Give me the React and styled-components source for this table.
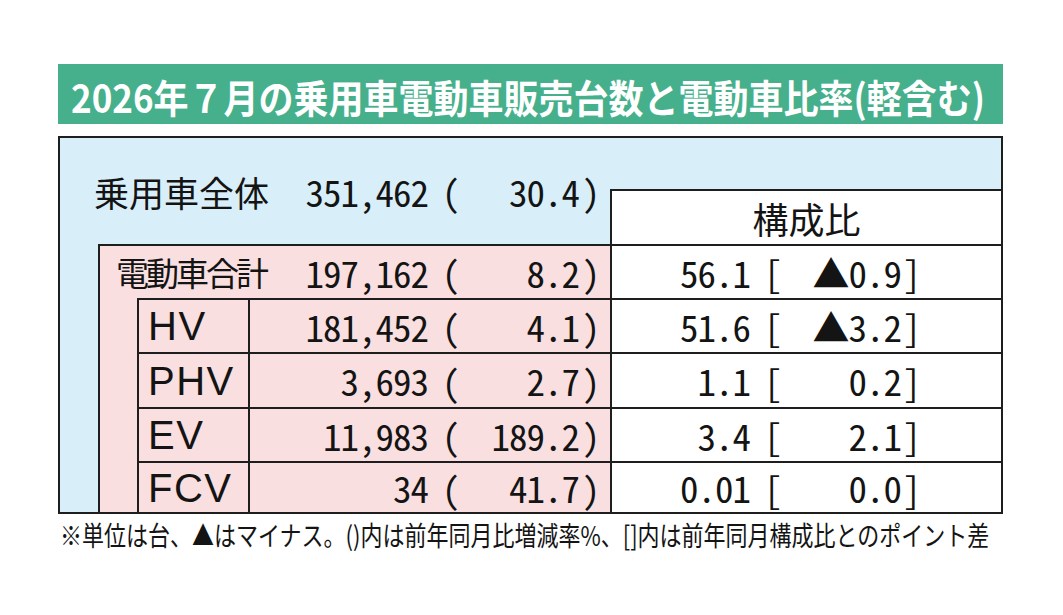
import React from 'react';
import styled, { createGlobalStyle } from 'styled-components';

const LINE = '#1e1e1e';
const BLUE = '#d8eff9';
const PINK = '#f9dfe0';
const GREEN = '#45b08b';
const JP = '"Noto Sans CJK JP", "Noto Sans", sans-serif';

const GlobalStyle = createGlobalStyle`
  html, body { margin: 0; padding: 0; background: #ffffff; }
  body { font-family: ${JP}; color: #141414; }
  * { box-sizing: border-box; }
`;

const Page = styled.div`
  width: 1063px;
  height: 615px;
  padding: 64px 60px 0 58px;
  display: flex;
  flex-direction: column;
`;

const TitleBar = styled.div`
  height: 60px;
  background: ${GREEN};
  display: flex;
  align-items: center;
  padding-left: 13px;
`;

const TitleText = styled.span`
  display: inline-block;
  white-space: nowrap;
  color: #ffffff;
  font-family: ${JP};
  font-weight: 700;
  font-size: 35px;
  line-height: 1;
  transform: scaleY(1.12);
  margin-top: 3px;
`;

const Frame = styled.div`
  margin-top: 12px;
  border: 2px solid ${LINE};
  background: ${BLUE};
  display: grid;
  grid-template-columns: 38px 39px 113px 360px 1fr;
  grid-template-rows: 51px 55px 54px 54px 55px 54px 51px;
  font-size: 35px;
  line-height: 1;
`;

const TotalRow = styled.div`
  grid-column: 1 / 5;
  grid-row: 1 / 3;
  display: flex;
  align-items: center;
  padding-left: 34px;
`;

const HeaderCell = styled.div`
  grid-column: 5;
  grid-row: 2;
  background: #ffffff;
  border-top: 2px solid ${LINE};
  border-left: 2px solid ${LINE};
  display: flex;
  align-items: center;
  justify-content: center;
  font-size: 36px;
`;

const GroupRow = styled.div`
  grid-column: 2 / 5;
  grid-row: 3;
  background: ${PINK};
  border-top: 2px solid ${LINE};
  border-left: 2px solid ${LINE};
  display: flex;
  align-items: center;
  padding-left: 16px;
`;

const Indent = styled.div`
  grid-column: 2;
  grid-row: 4 / 8;
  background: ${PINK};
  border-left: 2px solid ${LINE};
`;

const NameCell = styled.div`
  grid-column: 3;
  grid-row: ${(p) => p.$row};
  background: ${PINK};
  border-top: 2px solid ${LINE};
  border-left: 2px solid ${LINE};
  border-right: 2px solid ${LINE};
  display: flex;
  align-items: center;
  padding-left: 9px;
  font-family: "Liberation Sans", Arial, sans-serif;
  font-size: 40px;
  letter-spacing: 1.5px;
`;

const ValueCell = styled.div`
  grid-column: 4;
  grid-row: ${(p) => p.$row};
  background: ${PINK};
  border-top: 2px solid ${LINE};
  display: flex;
  align-items: center;
`;

const ShareCell = styled.div`
  grid-column: 5;
  grid-row: ${(p) => p.$row};
  background: #ffffff;
  border-top: 2px solid ${LINE};
  border-left: 2px solid ${LINE};
  display: flex;
  align-items: center;
`;

const RowLabel = styled.span`
  white-space: nowrap;
  font-size: ${(p) => (p.$tight ? '33px' : '35px')};
  letter-spacing: ${(p) => (p.$tight ? '-3px' : '0')};
`;

const Num = styled.span`
  white-space: nowrap;
  font-size: 37px;
  letter-spacing: -1px;
  font-feature-settings: "hwid" 1;
`;

const Count = styled.span`
  margin-left: auto;
  display: flex;
  align-items: center;
  white-space: nowrap;
`;

const Pct = styled.span`
  width: 150px;
  display: flex;
  align-items: center;
  justify-content: flex-end;
  padding-right: 10px;
  white-space: nowrap;
`;

const Mark = styled.span`
  font-size: 36px;
  font-feature-settings: "hwid" 1;
  margin-left: ${(p) => p.$gap || 0}px;
`;

const ShareMain = styled.span`
  width: 170px;
  display: flex;
  justify-content: flex-end;
  align-items: center;
  white-space: nowrap;
`;

const ShareDiff = styled.span`
  width: 139px;
  display: flex;
  justify-content: flex-end;
  align-items: center;
  white-space: nowrap;
`;

const Footnote = styled.div`
  margin-top: 9px;
  padding-left: 2px;
`;

const FootText = styled.span`
  display: inline-block;
  white-space: nowrap;
  font-size: 22px;
  line-height: 1;
  color: #141414;
  transform: scaleY(1.22);
`;

const subRows = [
  { name: 'HV', count: '181,452', pct: '4.1', share: '51.6', diff: '▲3.2' },
  { name: 'PHV', count: '3,693', pct: '2.7', share: '1.1', diff: '0.2' },
  { name: 'EV', count: '11,983', pct: '189.2', share: '3.4', diff: '2.1' },
  { name: 'FCV', count: '34', pct: '41.7', share: '0.01', diff: '0.0' },
];

function Figures({ count, pct }) {
  return (
    <>
      <Count>
        <Num>{count}</Num>
        <Mark $gap={14}>(</Mark>
      </Count>
      <Pct>
        <Num>{pct}</Num>
        <Mark $gap={3}>)</Mark>
      </Pct>
    </>
  );
}

function Share({ share, diff }) {
  return (
    <>
      <ShareMain>
        <Num>{share}</Num>
        <Mark $gap={14}>[</Mark>
      </ShareMain>
      <ShareDiff>
        <Num>{diff}</Num>
        <Mark $gap={2}>]</Mark>
      </ShareDiff>
    </>
  );
}

export default function App() {
  return (
    <>
      <GlobalStyle />
      <Page>
        <TitleBar>
          <TitleText>2026年７月の乗用車電動車販売台数と電動車比率(軽含む)</TitleText>
        </TitleBar>
        <Frame>
          <TotalRow>
            <RowLabel>乗用車全体</RowLabel>
            <Figures count="351,462" pct="30.4" />
          </TotalRow>
          <HeaderCell>構成比</HeaderCell>
          <GroupRow>
            <RowLabel $tight>電動車合計</RowLabel>
            <Figures count="197,162" pct="8.2" />
          </GroupRow>
          <ShareCell $row={3}>
            <Share share="56.1" diff="▲0.9" />
          </ShareCell>
          <Indent />
          {subRows.map((r, i) => (
            <React.Fragment key={r.name}>
              <NameCell $row={i + 4}>{r.name}</NameCell>
              <ValueCell $row={i + 4}>
                <Figures count={r.count} pct={r.pct} />
              </ValueCell>
              <ShareCell $row={i + 4}>
                <Share share={r.share} diff={r.diff} />
              </ShareCell>
            </React.Fragment>
          ))}
        </Frame>
        <Footnote>
          <FootText>
            ※単位は台、▲はマイナス。()内は前年同月比増減率%、[]内は前年同月構成比とのポイント差
          </FootText>
        </Footnote>
      </Page>
    </>
  );
}
